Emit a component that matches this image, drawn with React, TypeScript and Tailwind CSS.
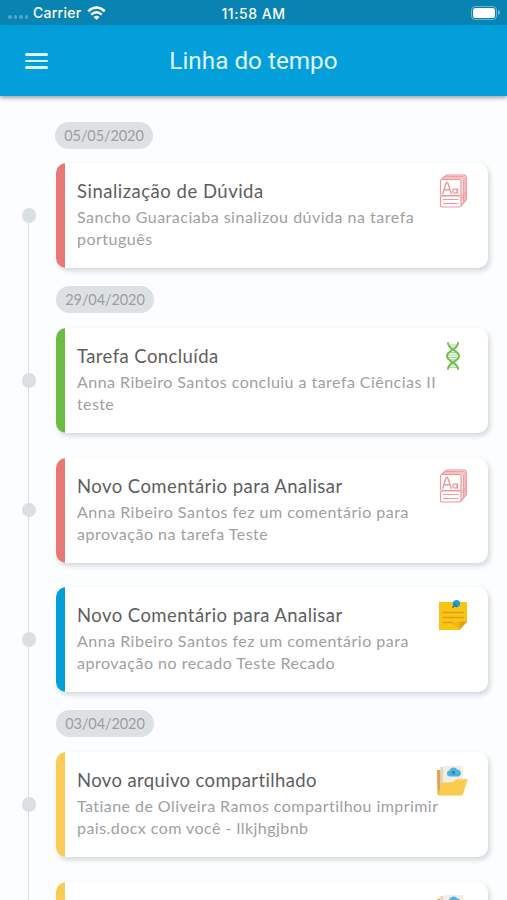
import type { ReactNode } from "react";

type IconKind = "book" | "dna" | "note" | "folder";

interface Line {
  text: string;
  spacing: string;
}

interface Entry {
  bar: string;
  icon: IconKind;
  title?: Line;
  lines: Line[];
}

interface Group {
  date: string;
  entries: Entry[];
}

const groups: Group[] = [
  {
    date: "05/05/2020",
    entries: [
      {
        bar: "bg-[#e87777]",
        icon: "book",
        title: { text: "Sinalização de Dúvida", spacing: "tracking-[0.5px]" },
        lines: [
          { text: "Sancho Guaraciaba sinalizou dúvida na tarefa", spacing: "tracking-[0.5px]" },
          { text: "português", spacing: "tracking-[0.5px]" },
        ],
      },
    ],
  },
  {
    date: "29/04/2020",
    entries: [
      {
        bar: "bg-[#6cbb43]",
        icon: "dna",
        title: { text: "Tarefa Concluída", spacing: "tracking-[0.42px]" },
        lines: [
          { text: "Anna Ribeiro Santos concluiu a tarefa Ciências II", spacing: "tracking-[0.46px]" },
          { text: "teste", spacing: "tracking-[0.4px]" },
        ],
      },
      {
        bar: "bg-[#e87777]",
        icon: "book",
        title: { text: "Novo Comentário para Analisar", spacing: "tracking-[0.44px]" },
        lines: [
          { text: "Anna Ribeiro Santos fez um comentário para", spacing: "tracking-[0.5px]" },
          { text: "aprovação na tarefa Teste", spacing: "tracking-[0.5px]" },
        ],
      },
      {
        bar: "bg-[#039fd9]",
        icon: "note",
        title: { text: "Novo Comentário para Analisar", spacing: "tracking-[0.44px]" },
        lines: [
          { text: "Anna Ribeiro Santos fez um comentário para", spacing: "tracking-[0.5px]" },
          { text: "aprovação no recado Teste Recado", spacing: "tracking-[0.5px]" },
        ],
      },
    ],
  },
  {
    date: "03/04/2020",
    entries: [
      {
        bar: "bg-[#fbcc54]",
        icon: "folder",
        title: { text: "Novo arquivo compartilhado", spacing: "tracking-[0.37px]" },
        lines: [
          { text: "Tatiane de Oliveira Ramos compartilhou imprimir", spacing: "tracking-[0.44px]" },
          { text: "pais.docx com você - llkjhgjbnb", spacing: "tracking-[0.46px]" },
        ],
      },
      { bar: "bg-[#fbcc54]", icon: "folder", lines: [] },
    ],
  },
];

function BookIcon() {
  return (
    <svg className="translate-x-px" width="32" height="36" viewBox="0 0 32 36" fill="none" stroke="#f0989c" strokeWidth="1.200" strokeLinejoin="round" strokeLinecap="round">
      <path d="M3.500 6.500 8.500 2H26Q28.300 2 28.300 4.500V26.500L23 33" fill="#fbe3e4" />
      <path d="M5.500 5H23.500Q25.500 5 25.500 7V29M7.500 3.500H24.800Q27 3.500 27 6V27.500" strokeWidth="0.900" />
      <path d="M23 23 28 19.500M23 25.500 28 22" strokeWidth="1" />
      <rect x="2.500" y="6.500" width="20.500" height="16" rx="1.500" fill="#fff" />
      <rect x="2.500" y="23" width="20.500" height="11" rx="1.500" fill="#fff" />
      <path d="M4.800 20.500 7.800 10.500Q9 8.500 10 10.500L13.200 20.500M6.200 16.800H12" strokeWidth="1.400" />
      <circle cx="17" cy="18" r="2.200" />
      <path d="M19.500 15.500V20.500M5.500 26.500H20M5.500 30.500H20" />
    </svg>
  );
}

function DnaIcon() {
  return (
    <svg width="16" height="28" viewBox="0 0 16 28" fill="none" stroke="#6cc04a" strokeLinecap="round">
      <path d="M3.500 3H12.500M4.500 5H11.500M3.500 10.500H12.500M2.500 13H13.500M2.500 15.500H13.500M4 17.800H12M4.500 23H11.500M3.500 25.300H12.500" strokeWidth="1" opacity="0.650" />
      <path d="M3 1C3 8 14 8 14 14S3 20 3 27" strokeWidth="1.900" />
      <path d="M13 1C13 8 2 8 2 14S13 20 13 27" strokeWidth="1.900" />
    </svg>
  );
}

function NoteIcon() {
  return (
    <svg width="30" height="32" viewBox="0 0 30 32" fill="none">
      <path d="M1 3H29V23L21.500 31H1Z" fill="#f9c513" />
      <path d="M29 22.500H21.500V31Z" fill="#e39b22" />
      <path d="M21.500 22.500V31L15 24Z" fill="#f3b318" />
      <path d="M4.500 13.500H26M4.500 18.500H26M4.500 23.500H15" stroke="#e59a1d" strokeWidth="1.700" />
      <path d="M14.500 8.500 17 6" stroke="#3e6671" strokeWidth="1.600" />
      <circle cx="18.500" cy="4.500" r="3.500" fill="#1b9fda" />
      <path d="M15.500 4 18.500 7.500" stroke="#137fae" strokeWidth="1.600" strokeLinecap="round" />
    </svg>
  );
}

function FolderIcon() {
  return (
    <svg className="-translate-x-px" width="32" height="31" viewBox="0 0 32 31" fill="none">
      <path d="M1 6Q1 5 2 5H5L8 8V29L1.500 29.500Z" fill="#e5a047" />
      <path d="M4.500 2H7L8 1H27V25H4.500Z" fill="#f2eee1" />
      <path d="M4.500 2V27L7 18V2Z" fill="#ddd6c4" />
      <path d="M13.500 11.500a3 3 0 0 1-.3-5.900 4.500 4.500 0 0 1 8.300-.8 3.400 3.400 0 0 1 .8 6.700Z" fill="#4db4e0" />
      <path d="M17.500 10V6.500M15.800 8 17.500 6.300 19.200 8" stroke="#2584b6" strokeWidth="1.100" />
      <path d="M5.500 18 17 17 20 14.500 31 14Q31.700 14 31.300 15.500L27 29Q26.700 30.500 25 30.500H2Z" fill="#fbcb4d" />
    </svg>
  );
}

const icons: Record<IconKind, ReactNode> = {
  book: <BookIcon />,
  dna: <DnaIcon />,
  note: <NoteIcon />,
  folder: <FolderIcon />,
};

function StatusBar() {
  return (
    <div className="grid h-[25px] grid-cols-3 items-center bg-[#0983b1] font-[Inter,sans-serif] text-[14px] leading-none font-medium text-white">
      <div className="flex items-center pl-2">
        <div className="mt-[9px] mr-[5px] flex gap-[2px]">
          {[0, 1, 2, 3].map((n) => (
            <span key={n} className="size-[3.500px] rounded-full bg-white/30" />
          ))}
        </div>
        <span className="mt-px tracking-[0.25px]">Carrier</span>
        <svg className="mt-px ml-[6px]" width="19" height="15" viewBox="0 0 19 15" fill="none" stroke="#fff" strokeWidth="2.500">
          <path d="M1.200 5.200Q9.500-2.200 17.800 5.200M4.200 8.600Q9.500 3.900 14.800 8.600" />
          <path d="M6.500 10.900Q9.500 8.400 12.500 10.900L9.500 14Z" fill="#fff" stroke="none" />
        </svg>
      </div>
      <span className="mt-[2px] text-center tracking-[0.550px] whitespace-nowrap">11:58 AM</span>
      <div className="flex items-center justify-end pr-[7px]">
        <div className="flex h-[14px] w-[26px] rounded-[4px] border border-white/40 p-px">
          <div className="flex-1 rounded-[2.500px] bg-white" />
        </div>
        <div className="ml-px h-[5px] w-[2px] rounded-r bg-white/40" />
      </div>
    </div>
  );
}

function Header() {
  return (
    <header className="relative z-10 shadow-[0_2px_4px_rgba(40,20,20,0.4)]">
      <StatusBar />
      <div className="grid h-[71px] grid-cols-[60px_1fr_60px] items-center bg-[#039fda]">
        <div className="mt-px ml-[25px] flex w-[23px] flex-col gap-[4px]">
          <span className="h-[2.500px] rounded-full bg-[#dcf6ff]" />
          <span className="h-[2.500px] rounded-full bg-[#dcf6ff]" />
          <span className="h-[2.500px] rounded-full bg-[#dcf6ff]" />
        </div>
        <h1 className="mt-[2px] text-center font-[Roboto,sans-serif] text-[24.300px] leading-none text-[#e0f8ff]">Linha do tempo</h1>
      </div>
    </header>
  );
}

function RailLine({ hidden = false, className }: { hidden?: boolean; className: string }) {
  return <div className={`ml-[28px] w-px ${hidden ? "bg-transparent" : "bg-[#d9dddf]"} ${className}`} />;
}

function DateRow({ date, first }: { date: string; first: boolean }) {
  return (
    <div className="flex">
      <div className="flex w-[56px] flex-col">
        <RailLine hidden={first} className="flex-1" />
      </div>
      <div className={first ? "-ml-px pt-[26px] pb-[14.300px]" : "pb-[15px]"}>
        <div className="flex h-[27px] w-[98px] items-center justify-center rounded-full bg-[#dde1e3] text-[14.500px] tracking-[-0.100px] text-[#9b9ea0]">
          {date}
        </div>
      </div>
    </div>
  );
}

function EntryRow({ entry, first, last }: { entry: Entry; first: boolean; last: boolean }) {
  return (
    <div className="flex">
      <div className="flex w-[56px] flex-col">
        <RailLine hidden={first} className="h-[45px]" />
        <div className="ml-[21.500px] size-[14.500px] rounded-full bg-[#dadfe0]" />
        <RailLine className="flex-1" />
      </div>
      <div className={last ? "pb-[18px]" : "pb-[24.500px]"}>
        <article className="flex h-[105px] w-[432px] overflow-hidden rounded-[10px] bg-white shadow-[2px_3px_5px_rgba(60,70,75,0.2)]">
          <div className={`w-[9px] shrink-0 ${entry.bar}`} />
          <div className="w-0 flex-1 pt-[16px] pl-[12px] whitespace-nowrap">
            {entry.title && (
              <h2 className={`text-[18.500px] leading-[24px] text-[#5e5e5e] ${entry.title.spacing}`}>{entry.title.text}</h2>
            )}
            <div className="mt-[3px] text-[16px] leading-[22px] text-[#a0a0a0]">
              {entry.lines.map((line) => (
                <p key={line.text} className={line.spacing}>
                  {line.text}
                </p>
              ))}
            </div>
          </div>
          <div className="mr-[19px] flex h-[56px] w-[32px] shrink-0 items-center justify-center">{icons[entry.icon]}</div>
        </article>
      </div>
    </div>
  );
}

export default function App() {
  return (
    <div className="h-[900px] w-full overflow-hidden bg-[#fbfdfe] font-[Lato,sans-serif]">
      <Header />
      <main>
        {groups.map((group, g) => (
          <section key={group.date}>
            <DateRow date={group.date} first={g === 0} />
            {group.entries.map((entry, i) => (
              <EntryRow key={i} entry={entry} first={g === 0 && i === 0} last={i === group.entries.length - 1} />
            ))}
          </section>
        ))}
      </main>
    </div>
  );
}
